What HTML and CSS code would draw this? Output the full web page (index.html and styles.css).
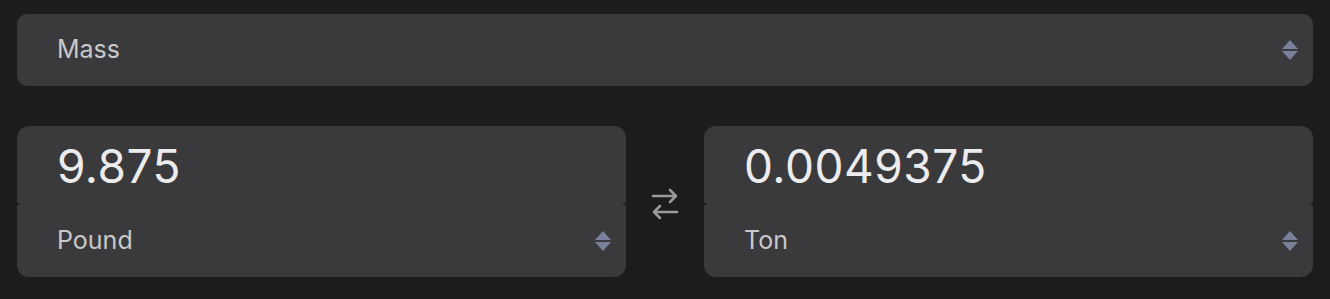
FILE: index.html
```html
<!DOCTYPE html>
<html lang="en">
<head>
<meta charset="utf-8">
<title>Unit converter</title>
<link rel="stylesheet" href="styles.css">
</head>
<body>
<main class="converter">
  <div class="select select-top">
    <span class="select-label">Mass</span>
    <svg class="updown" viewBox="0 0 18 22" width="18" height="22" aria-hidden="true"><path d="M9 1 L17 10 L1 10 Z M1 12 L17 12 L9 21 Z" fill="#7a8099"/></svg>
  </div>
  <div class="row">
    <div class="card">
      <div class="value">9.875</div>
      <div class="select select-unit">
        <span class="select-label">Pound</span>
        <svg class="updown" viewBox="0 0 18 22" width="18" height="22" aria-hidden="true"><path d="M9 1 L17 10 L1 10 Z M1 12 L17 12 L9 21 Z" fill="#7a8099"/></svg>
      </div>
    </div>
    <div class="swap">
      <svg viewBox="0 0 28 32" width="28" height="32" aria-hidden="true" fill="none" stroke="#9a9a9c" stroke-width="2.6" stroke-linecap="round" stroke-linejoin="round">
        <path d="M2 8 H25 M19 2 L25 8 L19 14"/>
        <path d="M26 24 H3 M9 18 L3 24 L9 30"/>
      </svg>
    </div>
    <div class="card">
      <div class="value">0.0049375</div>
      <div class="select select-unit">
        <span class="select-label">Ton</span>
        <svg class="updown" viewBox="0 0 18 22" width="18" height="22" aria-hidden="true"><path d="M9 1 L17 10 L1 10 Z M1 12 L17 12 L9 21 Z" fill="#7a8099"/></svg>
      </div>
    </div>
  </div>
</main>
</body>
</html>
```
FILE: styles.css
```css
html, body {
  margin: 0;
  padding: 0;
  background: #1c1c1e;
}
body {
  font-family: Inter, "Liberation Sans", sans-serif;
  width: 1330px;
  height: 299px;
  overflow: hidden;
}
.converter {
  padding: 14px 17px 0 17px;
  display: flex;
  flex-direction: column;
  gap: 40px;
}
.select {
  display: flex;
  align-items: center;
  justify-content: space-between;
  background: #3a3a3c;
  padding: 0 14px 0 40px;
  box-sizing: border-box;
  color: #c9c9cb;
  font-size: 25px;
}
.select-top {
  height: 72px;
  border-radius: 10px;
}
.select-label {
  padding-bottom: 3px;
}
.updown {
  display: block;
}
.row {
  display: grid;
  grid-template-columns: 1fr 78px 1fr;
  height: 151px;
}
.card {
  display: flex;
  flex-direction: column;
}
.value {
  height: 79px;
  box-sizing: border-box;
  background: #3a3a3c;
  border-radius: 12px 12px 5px 5px;
  padding-left: 40px;
  display: flex;
  align-items: center;
  color: #ececee;
  font-size: 46px;
  letter-spacing: 0.5px;
}
.select-unit {
  height: 72px;
  border-radius: 0 0 12px 12px;
}
.swap {
  display: flex;
  align-items: center;
  justify-content: center;
  padding-top: 4px;
}
.swap svg {
  display: block;
}
```
